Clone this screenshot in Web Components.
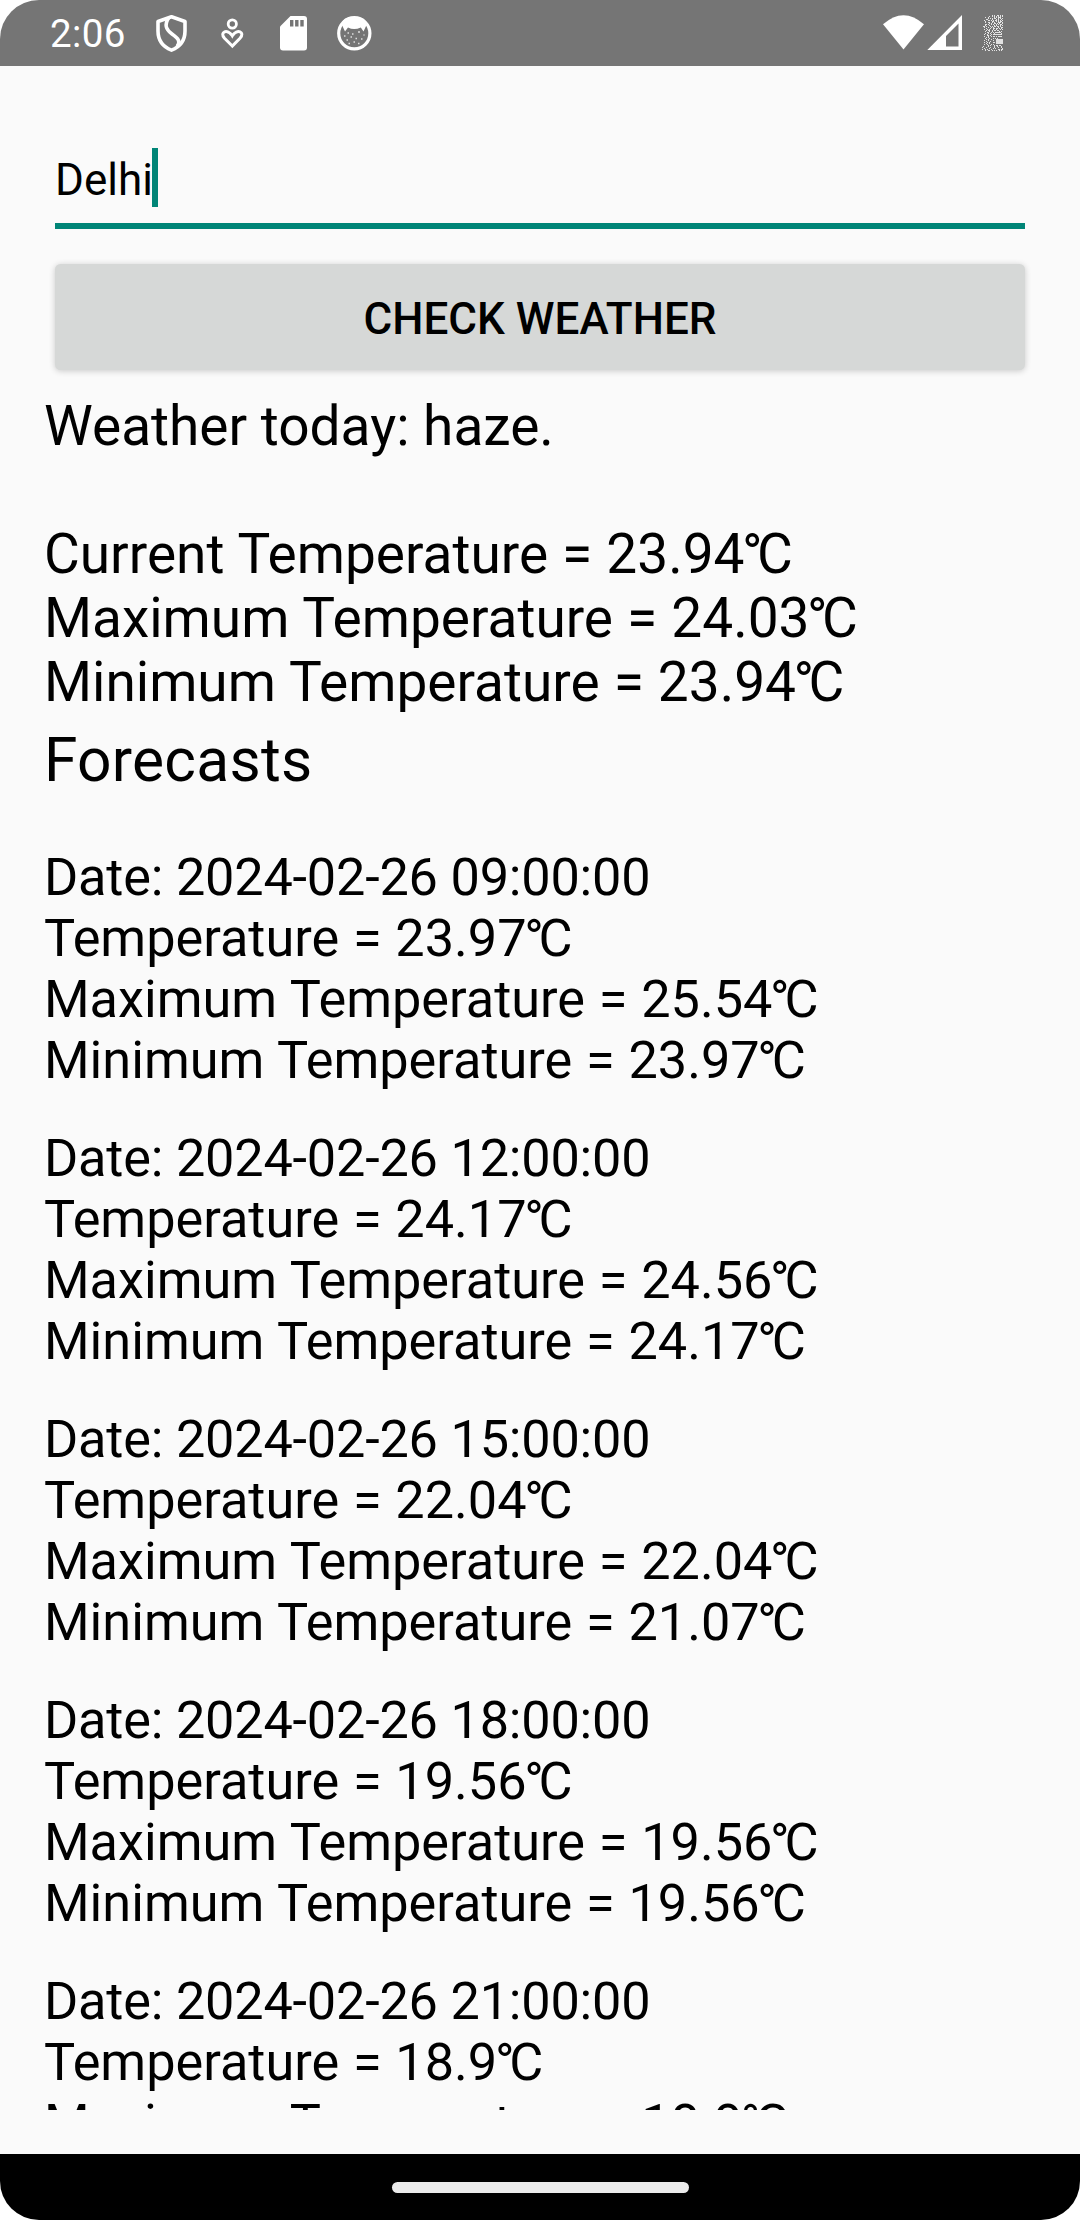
<!DOCTYPE html>
<html lang="en">
<head>
<meta charset="utf-8">
<title>Weather</title>
<style>
html,body{margin:0;background:#fff}
body{font-family:Roboto,"Noto Sans",sans-serif;color:#000}
</style>
</head>
<body>
<weather-screen></weather-screen>
<script>
const define = (name, html, setup) => {
  const template = document.createElement('template');
  template.innerHTML = html;
  customElements.define(name, class extends HTMLElement {
    connectedCallback() {
      if (this.shadowRoot) return;
      this.attachShadow({mode: 'open'}).append(template.content.cloneNode(true));
      if (setup) setup(this, this.shadowRoot);
    }
  });
};

define('status-bar', `
<style>
:host{display:flex;box-sizing:border-box;height:66px;flex:none;background:#757575;color:#fff;padding:0 68px 0 50px;justify-content:space-between}
div{display:flex}
span{font-size:38.5px;line-height:68px;height:66px;width:84px;letter-spacing:.4px;white-space:nowrap}
svg{display:block;height:66px;overflow:visible}
</style>
<div>
<span>2:06</span>
<svg width="266" viewBox="134 0 266 66" fill="none" stroke="#fff">
  <path d="M171.5 16.7 L185 21.5 V31 C185 41 179.5 47 171.5 50.2 C163.5 47 158 41 158 31 V21.5 Z" stroke-width="3.6" stroke-linejoin="round"/>
  <path d="M168.5 18 C163.5 26 167 30.5 172 34 C178.5 38.5 181 42 177 46.5" stroke-width="3.6"/>
  <circle cx="232.3" cy="24" r="4.1" stroke-width="2.8"/>
  <path d="M232.3 46 L224.5 38.2 C219 32 227.5 28.2 232.3 35.8 C237 28.2 245.7 32 240 38.2 Z" stroke-width="3"/>
  <path d="M290.5 16 H304 Q307 16 307 19 V47.5 Q307 50.5 304 50.5 H283 Q280 50.5 280 47.5 V26.5 Z" fill="#fff" stroke="none"/>
  <path d="M291.7 20 V26.5 M296.8 20 V26.5 M302 20 V26.5" stroke="#757575" stroke-width="3.4"/>
  <circle cx="354.3" cy="33.3" r="15.6" stroke-width="3.2"/>
  <path d="M341.5 24 Q343 17 354 17 Q365 17 367 24 L363.5 31.5 L360.8 27.5 Q354 30.5 348 27.5 L345 31.5 Z" fill="#fff" stroke="none"/>
  <path d="M344 36h1.5M347.5 33h1.5M352 34h1.5M358 32h2M363.5 35h1M346.5 40h1.5M350.5 37h1.5M355.5 38.5h1.5M361 39h1.5M348.5 43.5h1.5M353.5 42h1.5M358 43.5h1.5" stroke-width="1.5" stroke-opacity=".75"/>
</svg>
</div>
<svg width="129" viewBox="883 0 129 66" fill="#fff">
  <path d="M883 24.3 Q903.5 6 924 24.3 L903.5 49.5 Z"/>
  <path fill-rule="evenodd" d="M927.3 50 L962 15 V50 Z M946 36 V46.5 H958.5 V23.5 Z"/>
  <g id="noise"></g>
</svg>
`, (el, root) => {
  // Fragmented battery glyph: one string per pixel row.
  const rows = [
'..........#.#..##.#.#','.......#..#.#.#.#.#.#','...#..#.....#.#.###..','......#.#.#.##..#.#.#',
'....##....#...#.#..#.','..#...##.#.#.##.#.#.#','...#......##..#.#.##.','...#..##..#.#...###.#',
'.......#.#..##.#.#..#','...##.#..#.#..#.#.##.','...#...#....#.#...#.#','.##.#...#.#.##.##.#..',
'..#...#..#.#....#..##','....#...#..##.##.#.#.','..#..#.#...#..#...#.#','....#.##..#.##.##....',
'...#...#..#......#.#.','.....##..#.#.######..','...#..#.#...#......#.','..#..#...#.#########.',
'.....##.#............','..#...#..#.##.#.####.','....#.#..............','...#...#...#.#.#.....',
'....#.#..#....#######','..#...#....#..#######','....#...#.....#######','..#..#.#...##.#######',
'....#..#......#######','..#..#...#.#.........','......#.#...#.##.##..','.#....#.....#..#...#.',
'#...#...#...#...#..#.','..#....#...#.#......#','#..#.#...#......##.##','...#..##..#.#.#..#.#.'];
  root.getElementById('noise').innerHTML = '<path shape-rendering="crispEdges" fill-opacity=".8" d="' +
    rows.map((r, y) => [...r].map((c, x) => c === '#' ? `M${982 + x} ${15 + y}h1v1h-1z` : '').join('')).join('') + '"/>';
});

define('city-input', `
<style>
:host{display:flex;align-items:flex-end;box-sizing:border-box;height:163px;flex:none;margin:0 55px;border-bottom:6px solid #008577}
span{font-size:44px;line-height:52px;margin-bottom:17px}
i{width:6px;height:59px;background:#008577;margin:0 0 16px -1px}
</style>
<span><slot></slot></span><i></i>`);

define('raised-button', `
<style>
:host{display:flex;flex:none;height:106px;margin:35px 55px 0}
button{all:unset;flex:1;box-sizing:border-box;height:106px;padding-top:2px;border-radius:5.5px;background:#d6d8d7;box-shadow:0 1px 6px rgba(0,0,0,.2);font:500 44px/106px Roboto,sans-serif;text-align:center;text-transform:uppercase}
</style>
<button><slot></slot></button>`);

const degree = 'i{font-style:normal;margin-left:-.045em;letter-spacing:-.1em}';

define('current-weather', `
<style>
:host{display:flex;flex-direction:column;flex:none;box-sizing:border-box;height:344px;padding:24px 44px 0;font-size:55px;line-height:64px;white-space:nowrap}
div{height:64px}
.first{margin-bottom:64px}
.r{word-spacing:.4px}
${degree}
</style>
<div class="first">Weather today: haze.</div>
<div class="r">Current Temperature = 23.94<i>°</i>C</div>
<div class="r">Maximum Temperature = 24.03<i>°</i>C</div>
<div class="r">Minimum Temperature = 23.94<i>°</i>C</div>`);

define('forecast-item', `
<style>
:host{display:flex;flex-direction:column;flex:none;height:281px;font-size:52.25px;line-height:61px;white-space:nowrap}
div{height:61px;word-spacing:.8px}
#d{letter-spacing:-.2px;word-spacing:0}
${degree}
</style>
<div id="d"></div><div id="t"></div><div id="x"></div><div id="n"></div>`, (el, root) => {
  const put = (id, label, name) =>
    root.getElementById(id).innerHTML = `${label} = ${el.getAttribute(name)}<i>°</i>C`;
  root.getElementById('d').textContent = 'Date: 2024-02-26 ' + el.getAttribute('time');
  put('t', 'Temperature', 'temp');
  put('x', 'Maximum Temperature', 'max');
  if (el.hasAttribute('min')) put('n', 'Minimum Temperature', 'min');
});

define('forecast-list', `
<style>
:host{display:flex;flex-direction:column;flex:1;min-height:0;overflow:hidden;margin-bottom:44px;padding:0 44px}
h2{flex:none;margin:0 0 50px;font-size:60.5px;line-height:72px;font-weight:400;letter-spacing:.25px;padding-top:11px}
</style>
<h2>Forecasts</h2><slot></slot>`);

define('nav-bar', `
<style>
:host{display:flex;flex:none;height:66px;background:#000;align-items:center;justify-content:center}
i{width:297px;height:11px;border-radius:5.5px;background:#ebebeb}
</style>
<i></i>`);

define('weather-screen', `
<style>
:host{display:flex;flex-direction:column;width:1080px;height:2220px;background:#fafafa;border-radius:39px;overflow:hidden}
</style>
<status-bar></status-bar>
<city-input>Delhi</city-input>
<raised-button>Check Weather</raised-button>
<current-weather></current-weather>
<forecast-list>
<forecast-item time="09:00:00" temp="23.97" max="25.54" min="23.97"></forecast-item>
<forecast-item time="12:00:00" temp="24.17" max="24.56" min="24.17"></forecast-item>
<forecast-item time="15:00:00" temp="22.04" max="22.04" min="21.07"></forecast-item>
<forecast-item time="18:00:00" temp="19.56" max="19.56" min="19.56"></forecast-item>
<forecast-item time="21:00:00" temp="18.9" max="18.9"></forecast-item>
</forecast-list>
<nav-bar></nav-bar>`);
</script>
</body>
</html>
